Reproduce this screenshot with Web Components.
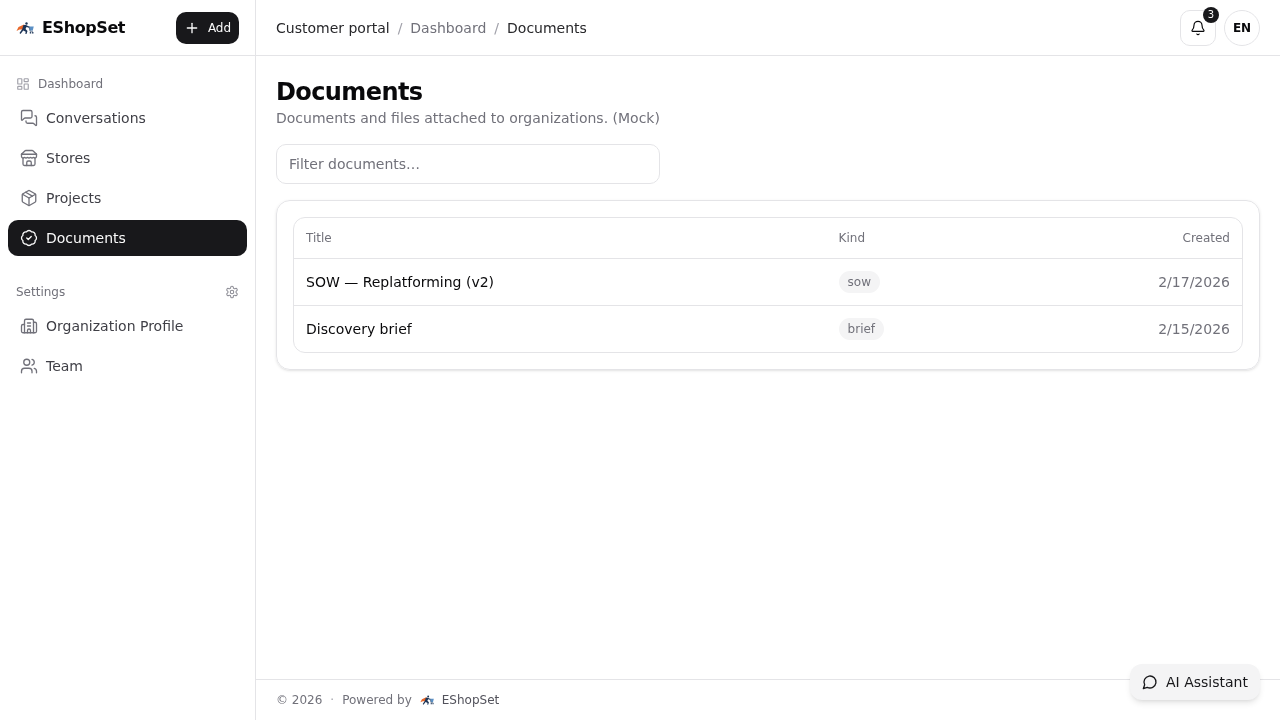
<!DOCTYPE html>
<html lang="en">
<head>
<meta charset="utf-8">
<title>Documents</title>
<style>
html,body{margin:0;padding:0;height:100%;background:#fff}
body{font-family:"DejaVu Sans",sans-serif;color:#09090b;overflow:hidden}
app-shell,ai-button{will-change:transform}
</style>
</head>
<body>
<app-shell>
  <app-sidebar slot="side">
    <side-label icon="dash" slot="a">Dashboard</side-label>
    <side-item icon="msgs" slot="a">Conversations</side-item>
    <side-item icon="store" slot="a">Stores</side-item>
    <side-item icon="pkg" slot="a">Projects</side-item>
    <side-item icon="badge" active slot="a">Documents</side-item>
    <side-label trailing="gear" slot="b">Settings</side-label>
    <side-item icon="org" slot="b">Organization Profile</side-item>
    <side-item icon="users" slot="b">Team</side-item>
  </app-sidebar>
  <app-header slot="head"></app-header>
  <doc-page slot="main"></doc-page>
  <app-footer slot="foot"></app-footer>
</app-shell>
<ai-button></ai-button>
<script>
const P={
dash:'<rect x="3" y="3" width="7" height="9" rx="1"/><rect x="14" y="3" width="7" height="5" rx="1"/><rect x="14" y="12" width="7" height="9" rx="1"/><rect x="3" y="16" width="7" height="5" rx="1"/>',
msgs:'<path d="M16 10a2 2 0 0 1-2 2H6.828a2 2 0 0 0-1.414.586l-2.202 2.202A.71.71 0 0 1 2 14.286V4a2 2 0 0 1 2-2h10a2 2 0 0 1 2 2z"/><path d="M20 9a2 2 0 0 1 2 2v10.286a.71.71 0 0 1-1.212.502l-2.202-2.202A2 2 0 0 0 17.172 19H10a2 2 0 0 1-2-2v-1"/>',
store:'<path d="m2 7 4.41-4.41A2 2 0 0 1 7.83 2h8.34a2 2 0 0 1 1.42.59L22 7"/><path d="M4 12v8a2 2 0 0 0 2 2h12a2 2 0 0 0 2-2v-8"/><path d="M15 22v-4a2 2 0 0 0-2-2h-2a2 2 0 0 0-2 2v4"/><path d="M2 7h20"/><path d="M22 7v3a2 2 0 0 1-2 2a2.7 2.7 0 0 1-1.59-.63.7.7 0 0 0-.82 0A2.7 2.7 0 0 1 16 12a2.7 2.7 0 0 1-1.59-.63.7.7 0 0 0-.82 0A2.7 2.7 0 0 1 12 12a2.7 2.7 0 0 1-1.59-.63.7.7 0 0 0-.82 0A2.7 2.7 0 0 1 8 12a2.7 2.7 0 0 1-1.59-.63.7.7 0 0 0-.82 0A2.7 2.7 0 0 1 4 12a2 2 0 0 1-2-2V7"/>',
pkg:'<path d="M11 21.73a2 2 0 0 0 2 0l7-4A2 2 0 0 0 21 16V8a2 2 0 0 0-1-1.73l-7-4a2 2 0 0 0-2 0l-7 4A2 2 0 0 0 3 8v8a2 2 0 0 0 1 1.73z"/><path d="M12 22V12"/><path d="M3.29 7 12 12l8.71-5"/><path d="m7.5 4.27 9 5.15"/>',
badge:'<path d="M3.85 8.62a4 4 0 0 1 4.78-4.77 4 4 0 0 1 6.74 0 4 4 0 0 1 4.78 4.78 4 4 0 0 1 0 6.74 4 4 0 0 1-4.77 4.78 4 4 0 0 1-6.75 0 4 4 0 0 1-4.78-4.77 4 4 0 0 1 0-6.76Z"/><path d="m9 12 2 2 4-4"/>',
org:'<path d="M10 12h4"/><path d="M10 8h4"/><path d="M14 21v-3a2 2 0 0 0-4 0v3"/><path d="M6 10H4a2 2 0 0 0-2 2v7a2 2 0 0 0 2 2h16a2 2 0 0 0 2-2V9a2 2 0 0 0-2-2h-2"/><path d="M6 21V5a2 2 0 0 1 2-2h8a2 2 0 0 1 2 2v16"/>',
users:'<path d="M16 21v-2a4 4 0 0 0-4-4H6a4 4 0 0 0-4 4v2"/><circle cx="9" cy="7" r="4"/><path d="M22 21v-2a4 4 0 0 0-3-3.87"/><path d="M16 3.13a4 4 0 0 1 0 7.75"/>',
gear:'<path d="M12.22 2h-.44a2 2 0 0 0-2 2v.18a2 2 0 0 1-1 1.73l-.43.25a2 2 0 0 1-2 0l-.15-.08a2 2 0 0 0-2.73.73l-.22.38a2 2 0 0 0 .73 2.73l.15.1a2 2 0 0 1 1 1.72v.51a2 2 0 0 1-1 1.74l-.15.09a2 2 0 0 0-.73 2.73l.22.38a2 2 0 0 0 2.73.73l.15-.08a2 2 0 0 1 2 0l.43.25a2 2 0 0 1 1 1.73V20a2 2 0 0 0 2 2h.44a2 2 0 0 0 2-2v-.18a2 2 0 0 1 1-1.73l.43-.25a2 2 0 0 1 2 0l.15.08a2 2 0 0 0 2.73-.73l.22-.39a2 2 0 0 0-.73-2.73l-.15-.08a2 2 0 0 1-1-1.74v-.5a2 2 0 0 1 1-1.74l.15-.09a2 2 0 0 0 .73-2.73l-.22-.38a2 2 0 0 0-2.73-.73l-.15.08a2 2 0 0 1-2 0l-.43-.25a2 2 0 0 1-1-1.73V4a2 2 0 0 0-2-2z"/><circle cx="12" cy="12" r="3"/>',
bell:'<path d="M10.268 21a2 2 0 0 0 3.464 0"/><path d="M3.262 15.326A1 1 0 0 0 4 17h16a1 1 0 0 0 .74-1.673C19.41 13.956 18 12.499 18 8A6 6 0 0 0 6 8c0 4.499-1.411 5.956-2.738 7.326"/>',
chat:'<path d="M7.9 20A9 9 0 1 0 4 16.1L2 22Z"/>',
plus:'<path d="M5 12h14"/><path d="M12 5v14"/>'
};
const ico=(n,s,c='currentColor',w=1.75)=>`<svg xmlns="http://www.w3.org/2000/svg" width="${s}" height="${s}" viewBox="0 0 24 24" fill="none" stroke="${c}" stroke-width="${w}" stroke-linecap="round" stroke-linejoin="round" style="display:block;flex:none">${P[n]}</svg>`;
const LOGO=s=>`<svg xmlns="http://www.w3.org/2000/svg" width="${s}" height="${s}" viewBox="0 0 36 36" style="display:block;flex:none">
<path d="M1 24 L5 16 L16 11 L19 14 L13 21 L7 21 Z" fill="#e8682a"/>
<circle cx="21" cy="9" r="2.4" fill="#1d3557"/>
<path d="M15 12 L20 12 L27 15.5 L26 17.5 L21 16 L19 20 L23 24 L21 30 L18.5 29.5 L19.5 25.5 L14.5 23 L9 30 L7 28 L12.5 20 Z" fill="#1d3557"/>
<path d="M26 15 H35.5 L33.5 23 H28 Z" fill="#5b8fc4"/>
<path d="M26 15 L28 24.5 H34" fill="none" stroke="#1d3557" stroke-width="1.2"/>
<circle cx="29" cy="27.5" r="1.7" fill="#1d3557"/><circle cx="33.5" cy="27.5" r="1.7" fill="#1d3557"/>
</svg>`;
function def(name,css,html,extra={}){
  customElements.define(name,class extends HTMLElement{
    constructor(){super();const r=this.attachShadow({mode:'open'});
      r.innerHTML=`<style>${css}</style>`+html;}
    connectedCallback(){
      if(extra.render&&!this._d){this._d=1;
        this.shadowRoot.innerHTML=`<style>${css}</style>`+extra.render(this);}
    }
  });
}
def('app-shell',`
:host{display:grid;grid-template-columns:256px 1fr;grid-template-rows:56px 1fr 41px;height:100vh}
.s{grid-row:1/4;grid-column:1;display:flex;min-height:0}
`,`<div class="s"><slot name="side"></slot></div><slot name="head"></slot><slot name="main"></slot><slot name="foot"></slot>`);
def('app-sidebar',`
:host{display:flex;flex-direction:column;width:256px;box-sizing:border-box;border-right:1px solid #e4e4e7}
.brand{height:56px;box-sizing:border-box;border-bottom:1px solid #e4e4e7;display:flex;align-items:center;justify-content:space-between;padding:0 16px}
.l{display:flex;align-items:center;gap:8px;font-size:16px;font-weight:700;letter-spacing:-.025em;color:#09090b}
.add{height:32px;width:63px;box-sizing:border-box;background:#18181b;color:#fafafa;border-radius:10px;display:flex;align-items:center;justify-content:center;gap:8px;font-size:12px}
nav{padding:16px 8px 8px;display:flex;flex-direction:column;gap:24px}
.g{display:flex;flex-direction:column;gap:4px}
`,`<div class="brand"><div class="l">${LOGO(18)}<span>EShopSet</span></div><div class="add">${ico('plus',16,'currentColor',2)}<span>Add</span></div></div>
<nav><div class="g"><slot name="a"></slot></div><div class="g"><slot name="b"></slot></div></nav>`);
def('side-label',`
:host{display:flex;align-items:center;height:24px;padding:0 8px;gap:8px;font-size:12px;color:#71717a}
span{flex:1}
`,'',{render:e=>`${e.getAttribute('icon')?ico(e.getAttribute('icon'),14,'#a1a1aa',2):''}<span><slot></slot></span>${e.getAttribute('trailing')?ico(e.getAttribute('trailing'),14,'#8a8a93'):''}`});
def('side-item',`
:host{display:flex;align-items:center;height:36px;padding:0 12px;gap:8px;font-size:14px;color:#3f3f46;border-radius:10px}
:host([active]){background:#18181b;color:#fafafa}
`,'',{render:e=>`${ico(e.getAttribute('icon'),18,e.hasAttribute('active')?'#fafafa':'#71717a')}<slot></slot>`});
def('app-header',`
:host{display:flex;align-items:center;justify-content:space-between;box-sizing:border-box;height:56px;border-bottom:1px solid #e4e4e7;padding:0 20px}
.b{display:flex;align-items:center;gap:8px;font-size:14px;color:#71717a}
.sep{color:#a1a1aa}
.f{color:#27272a}
.r{display:flex;gap:8px;align-items:center}
.bell{position:relative;width:36px;height:36px;box-sizing:border-box;border:1px solid #e4e4e7;border-radius:10px;display:flex;align-items:center;justify-content:center;color:#09090b}
.n{position:absolute;top:-4px;right:-4px;width:16px;height:16px;border-radius:50%;background:#18181b;color:#fafafa;font-size:10px;display:flex;align-items:center;justify-content:center}
.en{width:36px;height:36px;box-sizing:border-box;border:1px solid #e4e4e7;border-radius:50%;display:flex;align-items:center;justify-content:center;font-size:12px;font-weight:700;color:#09090b}
`,`<div class="b"><span class="f">Customer portal</span><span class="sep">/</span><span>Dashboard</span><span class="sep">/</span><span class="f">Documents</span></div>
<div class="r"><div class="bell">${ico('bell',16)}<span class="n">3</span></div><div class="en">EN</div></div>`);
def('doc-page',`
:host{display:block;padding:20px;min-height:0}
h1{margin:0;font-size:24px;line-height:32px;font-weight:700;letter-spacing:-.025em;color:#09090b}
p{margin:0;font-size:14px;line-height:20px;color:#71717a}
.i{margin-top:16px;width:384px;height:40px;box-sizing:border-box;border:1px solid #e4e4e7;border-radius:10px;padding:0 12px;display:flex;align-items:center;font-size:14px;color:#71717a}
.card{margin-top:16px;border:1px solid #e4e4e7;border-radius:14px;padding:16px;box-shadow:0 1px 3px rgba(0,0,0,.1),0 1px 2px -1px rgba(0,0,0,.1)}
.t{border:1px solid #e4e4e7;border-radius:12px;overflow:hidden}
`,`<h1>Documents</h1><p>Documents and files attached to organizations. (Mock)</p>
<div class="i">Filter documents…</div>
<div class="card"><div class="t">
<doc-row head a="Title" b="Kind" c="Created"></doc-row>
<doc-row a="SOW — Replatforming (v2)" b="sow" c="2/17/2026"></doc-row>
<doc-row a="Discovery brief" b="brief" c="2/15/2026"></doc-row>
</div></div>`);
def('doc-row',`
:host{display:grid;grid-template-columns:532.6px 1fr auto;align-items:center;height:46px;padding:0 12px;font-size:14px;color:#09090b;border-bottom:1px solid #e4e4e7}
:host(:last-child){border-bottom:0}
:host([head]){height:40px;font-size:12px;color:#71717a}
.d{color:#71717a;text-align:right}
.pill{display:inline-block;background:#f4f4f5;color:#71717a;font-size:12px;line-height:16px;padding:3px 9px;border-radius:999px}
`,'',{render:e=>{const h=e.hasAttribute('head'),g=n=>e.getAttribute(n);
return `<span>${g('a')}</span><span>${h?g('b'):`<span class="pill">${g('b')}</span>`}</span><span class="d">${g('c')}</span>`;}});
def('app-footer',`
:host{display:flex;align-items:center;gap:8px;box-sizing:border-box;height:41px;border-top:1px solid #e4e4e7;padding:0 20px;font-size:12px;color:#71717a}
.dot{color:#a1a1aa}
.n{color:#52525b}
`,`<span>© 2026</span><span class="dot">·</span><span>Powered by</span>${LOGO(14)}<span class="n">EShopSet</span>`);
def('ai-button',`
:host{position:fixed;right:20px;bottom:20px;display:flex;align-items:center;gap:8px;height:36px;padding:0 12px;border-radius:12px;background:#f4f4f5;color:#18181b;font-size:14px;box-shadow:0 4px 6px -1px rgba(0,0,0,.1),0 2px 4px -2px rgba(0,0,0,.1)}
`,`${ico('chat',16,'currentColor',2)}<span>AI Assistant</span>`);
</script>
</body>
</html>
